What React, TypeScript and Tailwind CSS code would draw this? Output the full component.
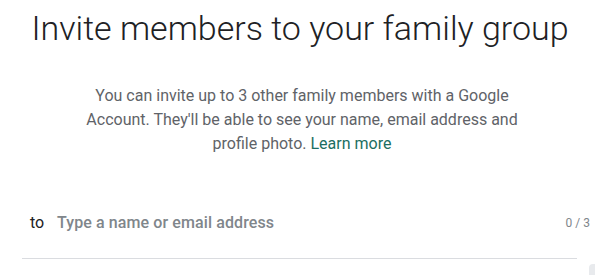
export default function App() {
  return (
    <div
      className="relative w-[595px] h-[275px] overflow-hidden bg-white"
      style={{ fontFamily: 'Roboto, "Liberation Sans", sans-serif' }}
    >
      <h1 className="pt-[6px] pl-[5px] text-center text-[34px] leading-[44px] font-light text-[#202124]">
        Invite members to your family group
      </h1>
      <div className="pl-[9px]">
        <p className="mt-[34px] mx-auto w-[440px] text-center text-[16px] leading-[24px] text-[#5f6368]">
          You can invite up to 3 other family members with a Google Account. They'll be able to see your name, email
          address and profile photo. <span className="text-[#1b6e62]">Learn more</span>
        </p>
      </div>
      <div className="mt-[54px] ml-[22px] w-[555px]">
        <div className="flex items-center h-[26px] pl-[8px]">
          <span className="text-[16px] text-[#202124] w-[27px]">to</span>
          <span className="flex-1 text-[16px] font-medium tracking-[0.1px] text-[#80868b]">
            Type a name or email address
          </span>
          <span className="text-[12px] text-[#80868b] -mr-[13px]">0 / 3</span>
        </div>
        <div className="mt-[22px] h-px bg-[#dadce0]" />
      </div>
      <div className="absolute left-[589px] top-[264px] w-[10px] h-[14px] rounded-tl-[4px] bg-[#e8eaed]" />
    </div>
  );
}
